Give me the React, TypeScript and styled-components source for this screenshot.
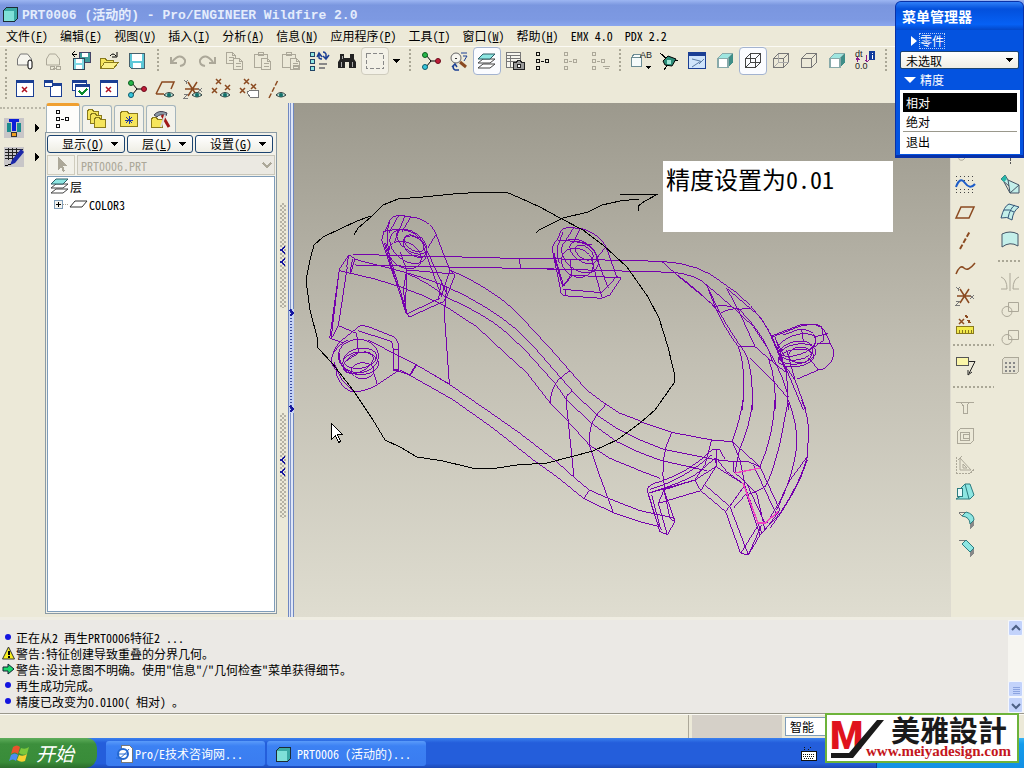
import { ReactNode, useState } from "react";
import styled, { createGlobalStyle } from "styled-components";

const Global = createGlobalStyle`
    *{
        box-sizing: border-box;
    }
    body{
        margin: 0;
        background-color: #ece9d8;
        color: black;
        font-family: "Noto Sans Mono CJK SC", "Noto Sans CJK SC", sans-serif;
        font-size: 12px;
    }
    button, select{
        font: inherit;
        color: inherit;
    }
    button{
        padding: 0;
        border: none;
        background: none;
    }
`;

const Page = styled.div`
    display: flex;
    flex-direction: column;
    min-height: 100vh;
`;

const TitleBar = styled.header`
    display: flex;
    align-items: center;
    height: 26px;
    padding: 0 3px;
    column-gap: 4px;
    color: #e4ecfc;
    background: linear-gradient(#9db6f2, #7a96df 20%, #7d99e2 75%, #8aa6ee);
    h1{
        margin: 0;
        font-family: "Liberation Mono", "Noto Sans CJK SC", monospace;
        font-size: 13px;
        font-weight: bold;
        white-space: pre;
    }
`;

const MenuBar = styled.nav`
    display: flex;
    align-items: center;
    height: 21px;
    padding: 0 6px;
    column-gap: 12px;
    border-bottom: 1px solid #fbfaf4;
    button{
        white-space: nowrap;
        line-height: 18px;
    }
`;

const Toolbar = styled.div`
    display: flex;
    align-items: center;
    height: 28px;
`;

const Handle = styled.span<{ $first?: boolean }>`
    width: ${(p) => (p.$first ? "11px" : "14px")};
    height: 24px;
    background: repeating-linear-gradient(#aaa796 0 2px, transparent 2px 4px) center / 2px 100% no-repeat;
`;

const Tool = styled.button<{ $active?: boolean; $framed?: boolean }>`
    display: flex;
    justify-content: center;
    align-items: center;
    width: 28px;
    height: 28px;
    border-radius: 4px;
    border: 1px solid ${(p) => (p.$active ? "#a3b3d0" : p.$framed ? "#cfccbd" : "transparent")};
    background-color: ${(p) => (p.$active ? "#fbfcff" : p.$framed ? "#f3f1e7" : "transparent")};
`;

const DropTool = styled(Tool)`
    width: 14px;
`;

const Work = styled.main`
    display: flex;
    flex: 1;
    min-height: 514px;
`;

const SideBar = styled.div`
    width: 45px;
    border-top: 2px dotted #bab7a8;
    margin-top: 4px;
`;

const SideRow = styled.div`
    display: flex;
    align-items: center;
    height: 29px;
    padding-top: 8px;
    column-gap: 2px;
    button{
        display: flex;
    }
    button:first-child{
        padding-left: 4px;
    }
`;

const Navigator = styled.aside`
    display: flex;
    flex-direction: column;
    width: 232px;
    padding-bottom: 3px;
`;

const Tabs = styled.div`
    display: flex;
    align-items: flex-end;
    height: 29px;
    column-gap: 2px;
    padding-left: 1px;
`;

const Tab = styled.button<{ $active?: boolean }>`
    display: flex;
    justify-content: center;
    align-items: center;
    width: ${(p) => (p.$active ? "34px" : "30px")};
    height: ${(p) => (p.$active ? "29px" : "27px")};
    border: 1px solid #a5b5bd;
    border-top: ${(p) => (p.$active ? "3px solid #f0a030" : "1px solid #a5b5bd")};
    border-bottom: none;
    border-radius: 3px 3px 0 0;
    background-color: ${(p) => (p.$active ? "#fdfdfb" : "#f3f2ea")};
`;

const Panel = styled.div`
    display: flex;
    flex-direction: column;
    flex: 1;
    padding: 1px;
    row-gap: 1px;
    border: 1px solid #8a9aa4;
    background-color: #f2f1e9;
`;

const PanelRow = styled.div`
    display: flex;
    align-items: center;
    height: 20px;
    column-gap: 2px;
`;

const PushButton = styled.button<{ $width: string }>`
    display: flex;
    justify-content: flex-end;
    align-items: center;
    width: ${(p) => p.$width};
    height: 18px;
    white-space: nowrap;
    line-height: 16px;
    border: 1px solid #1c4470;
    border-radius: 3px;
    background: linear-gradient(#ffffff, #eeede4);
`;

const PickButton = styled.button`
    display: flex;
    justify-content: center;
    align-items: center;
    width: 28px;
    height: 20px;
    border: 1px solid #cfccbd;
`;

const PartSelect = styled.select`
    flex: 1;
    height: 20px;
    padding: 0 3px;
    border: 1px solid #c9c7ba;
    border-radius: 0;
    appearance: none;
    background: #ebe9e2;
    &:disabled{
        color: #aca899;
        opacity: 1;
    }
`;

const SelectBox = styled.div`
    display: flex;
    flex: 1;
    align-items: center;
    svg{
        margin-left: -20px;
        pointer-events: none;
    }
`;

const Tree = styled.ul`
    flex: 1;
    margin: 0;
    padding: 0 2px;
    list-style: none;
    border: 1px solid #7f9db9;
    background-color: white;
    ul{
        margin: 0;
        padding: 0;
        list-style: none;
    }
    span{
        display: flex;
        align-items: center;
        height: 18px;
    }
`;

const Sash = styled.div`
    display: flex;
    flex-direction: column;
    align-items: center;
    width: 11px;
    padding-top: 100px;
    row-gap: 105px;
`;

const Grip = styled.button`
    display: flex;
    flex-direction: column;
    justify-content: center;
    align-items: center;
    row-gap: 4px;
    width: 6px;
    height: 105px;
    background: repeating-conic-gradient(#b5b2a5 0 25%, #ece9d8 0 50%) 0 0 / 4px 4px;
`;

const Divider = styled.div`
    display: flex;
    flex-direction: column;
    justify-content: flex-start;
    align-items: center;
    width: 6px;
    padding-top: 206px;
    border: 1px solid #7088c0;
    border-width: 0 1px;
    background: linear-gradient(90deg, #dfe6f6 0 1px, #8095ca 1px 2px, #dfe6f6 2px);
`;

const DividerGrip = styled.button`
    display: flex;
    flex-direction: column;
    justify-content: space-between;
    width: 5px;
    height: 104px;
    background: repeating-linear-gradient(#3b4da0 0 1px, #c5d2f4 1px 3px) center / 2px 100% no-repeat #c5d2f4;
`;

const Viewport = styled.section`
    position: relative;
    flex: 1;
    background: linear-gradient(#9c998d, #c2bfb3 50%, #dfddd0);
`;

const Model = styled.svg`
    display: block;
    width: 100%;
    max-width: 656px;
    fill: none;
    stroke-width: 3;
    shape-rendering: crispEdges;
`;

const Note = styled.p`
    position: absolute;
    left: 369px;
    top: 58px;
    width: 230px;
    height: 71px;
    margin: 0;
    padding: 1px 3px;
    font-size: 24px;
    line-height: 34px;
    font-weight: 300;
    background-color: white;
`;

const FeatureBar = styled.div`
    display: flex;
    border-left: 1px solid #dedbd0;
`;

const FeatureColumn = styled.div<{ $width: string }>`
    width: ${(p) => p.$width};
    padding-top: 39px;
    hr{
        height: 2px;
        margin: 6px 2px;
        border: none;
        background: repeating-linear-gradient(90deg, #aaa796 0 2px, transparent 2px 4px);
    }
`;

const Messages = styled.section`
    display: flex;
    height: 97px;
    border-top: 3px solid #efede2;
    border-bottom: 1px solid #9a988c;
    background-color: #ebe9e5;
    ul{
        flex: 1;
        margin: 0;
        padding: 9px 2px 0;
        list-style: none;
    }
    li{
        display: flex;
        align-items: center;
        height: 16px;
        white-space: pre;
    }
    li svg{
        margin-right: 1px;
    }
`;

const ScrollBar = styled.div`
    display: flex;
    flex-direction: column;
    width: 16px;
    background-color: #f6f5f0;
    div{
        flex: 1;
    }
    button{
        display: flex;
        justify-content: center;
        align-items: center;
        width: 15px;
        height: 16px;
        border: 1px solid #f4f7fe;
        border-radius: 2px;
        background-color: #c3d3fb;
    }
`;

const StatusBar = styled.footer`
    display: flex;
    align-items: center;
    height: 24px;
    border-top: 1px solid #fbfaf4;
    column-gap: 3px;
`;

const StatusText = styled.div`
    flex: 1;
    align-self: stretch;
    border-right: 1px solid #aca899;
`;

const StatusWell = styled.div`
    align-self: stretch;
    width: 90px;
    background-color: #d5d0c8;
`;

const FilterSelect = styled.select`
    width: 110px;
    height: 19px;
    margin-right: 129px;
    padding: 0 4px;
    border: 1px solid #7f9db9;
    border-radius: 0;
    appearance: none;
    background-color: white;
`;

const TaskBar = styled.footer`
    display: flex;
    align-items: center;
    height: 30px;
    background: linear-gradient(#3a80ee, #245edb 16%, #245edb 85%, #1c48b4);
    color: white;
`;

const Start = styled.button`
    display: flex;
    align-items: center;
    column-gap: 7px;
    width: 97px;
    height: 30px;
    margin-right: 9px;
    padding-left: 9px;
    border-radius: 0 10px 12px 0;
    font-size: 19px;
    line-height: 24px;
    font-weight: 300;
    font-style: italic;
    color: white;
    background: linear-gradient(#5fae5c, #3c8f3c 20%, #398c39 80%, #2c6d2c);
`;

const Task = styled.button`
    display: flex;
    align-items: center;
    width: 159px;
    height: 25px;
    margin-right: 2px;
    padding-left: 9px;
    border-radius: 3px;
    white-space: pre;
    color: white;
    background: linear-gradient(#5a9bfa, #3c81f3 20%, #3a7cf0);
`;

const Keyboard = styled.button`
    display: flex;
    margin-left: auto;
    margin-right: 58px;
`;

const Tray = styled.div`
    align-self: stretch;
    width: 148px;
    border-left: 1px solid #0b3c9a;
    background: linear-gradient(#3ab4f4, #149cec 20%, #1290e4);
`;

const MenuManager = styled.aside`
    position: absolute;
    top: 1px;
    right: 0;
    width: 129px;
    height: 157px;
    padding: 0 4px;
    border: 1px solid #0831a8;
    border-bottom-width: 3px;
    border-radius: 6px 6px 0 0;
    color: white;
    background-color: #0453e0;
    h2{
        margin: 0 -4px;
        padding: 0 6px;
        border-radius: 5px 5px 0 0;
        font-size: 14px;
        line-height: 28px;
        font-weight: bold;
        background: linear-gradient(#2f80f8, #0350dc 25%, #0661f5 80%, #0347c8);
    }
    select{
        width: 119px;
        height: 18px;
        padding: 0 5px;
        border: 1px solid #1c4470;
        border-radius: 2px;
        appearance: none;
        color: black;
        background: linear-gradient(#ffffff, #eeede4);
    }
    ${SelectBox}{
        height: 18px;
    }
`;

const MenuHead = styled.button<{ $focus?: boolean }>`
    display: flex;
    align-items: center;
    column-gap: 2px;
    height: 21px;
    padding-left: 4px;
    color: white;
    span{
        line-height: 14px;
        border: 1px dotted ${(p) => (p.$focus ? "#b9cdf5" : "transparent")};
    }
`;

const MenuList = styled.div`
    width: 120px;
    padding: 3px;
    background-color: white;
    color: black;
    hr{
        margin: 0;
        border: none;
        border-top: 1px solid #9a988c;
    }
`;

const MenuOption = styled.button<{ $selected?: boolean }>`
    display: block;
    width: 100%;
    height: 19px;
    padding-left: 3px;
    text-align: left;
    color: ${(p) => (p.$selected ? "white" : "black")};
    background-color: ${(p) => (p.$selected ? "black" : "white")};
`;

const Brand = styled.a`
    position: absolute;
    right: 5px;
    bottom: 5px;
    display: flex;
    width: 194px;
    height: 50px;
    padding: 0 4px;
    border: 2px solid #6db33a;
    background-color: white;
    text-decoration: none;
    svg{
        flex: none;
    }
`;

const BrandText = styled.span`
    display: flex;
    flex-direction: column;
    margin-left: -25px;
    b{
        padding-left: 25px;
        font-size: 29px;
        line-height: 28px;
        font-weight: 900;
        color: #1a1a1a;
    }
    small{
        font-family: "Liberation Serif", serif;
        font-size: 15px;
        line-height: 17px;
        font-weight: bold;
        color: #c4161c;
    }
`;

const IconSvg = styled.svg`
    display: block;
    flex: none;
    fill: none;
    stroke-width: 1;
    shape-rendering: crispEdges;
    overflow: visible;
    text{
        font-family: "Liberation Sans", sans-serif;
        font-size: 9px;
        fill: #222;
    }
`;

const cyan = "#8de6e2";
const grey = "#aca899";
const brown = "#8b4a20";
const blue = "#1b3f94";

const sheet = (x: number, y: number) => (
    <path d={`M${x} ${y}h6l3 3v8h-9zM${x + 6} ${y}v3h3M${x + 2} ${y + 5}h5M${x + 2} ${y + 8}h5`} fill="#ece9d8" stroke={grey} />
);
const cross = (x: number, y: number, c = brown) => (
    <path d={`M${x} ${y}l5 5M${x + 5} ${y}l-5 5`} stroke={c} strokeWidth="1.5" shapeRendering="auto" />
);
const eye = (
    <g shapeRendering="auto">
        <path d="M9 16q5-5 10 0q-5 4-10 0z" fill="#b6dcd4" stroke="#2c3c3c" />
        <circle cx="14" cy="16" r="2" fill="#12706a" />
    </g>
);
const windowFrame = (x: number, y: number, w: number, h: number) => (
    <>
        <rect x={x + 0.5} y={y + 0.5} width={w} height={h} fill="white" stroke={blue} />
        <path d={`M${x} ${y + 1.5}h${w + 1}`} stroke={blue} strokeWidth="3" />
    </>
);
const cube = (fill: string, c: string, hidden?: string, side = fill) => (
    <>
        <path d="M2.5 7.5l5-5h10v9l-5 5h-10z" fill={fill} stroke={c} />
        {side !== fill && <path d="M12.500 7.500l5-5v9l-5 5z" fill={side} />}
        {side !== fill && <path d="M3 7h10v9h-10z" fill="white" stroke={c} />}
        <path d="M2.500 7.500h10v9M12.500 7.500l5-5" stroke={c} />
        {hidden && <path d="M7.500 2.500v9h10M7.500 11.500l-5 5" stroke={hidden} />}
    </>
);
const nodes = (c: string) => <path d="M3.500 1.500h3v3h-3zM3.500 8.500h3v3h-3zM3.500 15.500h3v3h-3zM12.500 8.500h3v3h-3zM8 10.500h3" stroke={c} />;
const molecule = (
    <g shapeRendering="auto">
        <path d="M5 4l5 6l-5 6M10 10h7" stroke="black" />
        <circle cx="4" cy="4" r="2.500" fill="#27b84a" stroke="#0c5c20" />
        <circle cx="4" cy="16" r="2.500" fill="#36c6dc" stroke="#0c5c6c" />
        <circle cx="17" cy="10" r="2.500" fill="#c01c38" stroke="#6c0c1c" />
    </g>
);
const layers = (
    <g shapeRendering="auto">
        <path d="M1 17l5-4h12l-5 4z" fill="white" stroke="#444" />
        <path d="M1 12l5-4h12l-5 4z" fill="white" stroke="#444" />
        <path d="M1 8l5-5h12l-5 5z" fill={cyan} stroke="#2c5c64" />
    </g>
);
const folder = (x: number, y: number) => (
    <path d={`M${x + 0.5} ${y + 2.5}l1-2h4l1 2h5v8h-11z`} fill="#f6e55c" stroke="#8a7a1c" />
);
const overlap = <path d="M8.500 2.500h10v9h-10zM12 11.500a5 5 0 1 1 -5-5a5 5 0 0 1 5 5z" stroke={grey} shapeRendering="auto" />;
const axes = <path d="M2 10h14M5 3l9 14M14 3l-9 14" stroke={brown} shapeRendering="auto" strokeWidth="1.500" />;
const xyz = <path d="M1 1l2 2l2-2M3 3v2M1 15h4l-4 4h4M15 9l4 4M19 9l-4 4" stroke="#777" />;

const shapes: Record<string, ReactNode> = {
    app: <><path d="M2.500 5.500l3-3h11v11l-3 3h-11z" fill="#3aa9a4" stroke="#1c2c34" /><path d="M3 6h10v10h-10z" fill="#7fe0d8" /></>,
    newPart: <><path d="M2.500 8l3-5h7l4 5v6h-14z" fill="#f6f5ee" stroke="#777" shapeRendering="auto" /><rect x="13" y="9" width="4" height="9" rx="2" fill="white" stroke="black" shapeRendering="auto" /></>,
    closed: <><path d="M3.500 8l3-5h6l4 5v6h-13z" stroke={grey} shapeRendering="auto" /><path d="M7 15.500h4v3h-4zM13 15.500h4v3h-4zM10 17h4" stroke={grey} /></>,
    swap: <><path d="M8.500 1.500h11v10h-11z" fill="#3f9c9c" stroke="#446" /><path d="M11 2h6v4h-6z" fill="white" /><path d="M2.500 7.500h11v11h-11z" fill="#7fd8e4" stroke="#345" /><path d="M5 8h6v4h-6zM5 14h6v4h-6z" fill="white" /><path d="M1 3l3-3M1 3l3 3M1 3h5" stroke="black" /></>,
    open: <><path d="M1.500 17.500v-10h5l1 2h7v3" fill="#f6e55c" stroke="#8a7a1c" /><path d="M1.500 17.500l4-6h14l-5 6z" fill="#fbf08a" stroke="#8a7a1c" /><path d="M11 5q3-4 6 0M18 1v5h-5" stroke="black" shapeRendering="auto" /></>,
    save: <><path d="M2.500 2.500h15v15h-13l-2-2z" fill="#5ec8d8" stroke="#46606c" /><path d="M5 3h10v7h-10zM6 12h8v5h-8z" fill="white" /></>,
    undo: <path d="M3 11q8-10 13-2q1 5-5 6M2 6v6h6" stroke={grey} strokeWidth="2" shapeRendering="auto" />,
    redo: <path d="M16 11q-8-10-13-2q-1 5 5 6M18 6v6h-6" stroke={grey} strokeWidth="2" shapeRendering="auto" />,
    copy: <>{sheet(1.5, 1.5)}{sheet(8.5, 7.5)}</>,
    paste: <><path d="M1.500 3.500h13v13h-13zM5.500 1.500h5v3h-5z" stroke={grey} />{sheet(8.5, 7.5)}</>,
    pasteSpecial: <><path d="M1.500 3.500h13v13h-13zM5.500 1.500h5v3h-5z" stroke={grey} />{sheet(9.5, 7.5)}<path d="M12 14h5v3h-5z" stroke={grey} /></>,
    regen: <><path d="M1.500 1.500h4v4h-4zM1.500 8.500h4v4h-4zM1.500 15.500h4v4h-4z" fill={cyan} stroke="#246" /><path d="M8 6l2-4l3 4M10 3v4q1 1 3 1M20 4l-3 4l-3-3M17 7v-4q-1-2-3-2" stroke={blue} strokeWidth="1.500" shapeRendering="auto" /><path d="M10 13h8M10 17h6" stroke="#888" strokeWidth="1.500" /></>,
    find: <><path d="M3 3h4v4h6v-4h4v5l2 3v6h-7v-6h-4v6h-7v-6l2-3z" fill="#222" shapeRendering="auto" /><path d="M4 11v5M15 11v5M5 5v3" stroke="#aaa" /></>,
    selectBox: <path d="M1.500 2.500h17v15h-17z" stroke="#888" strokeDasharray="4 2" />,
    drop: <path d="M6 8h8l-4 4z" fill="black" />,
    molecule,
    zoomRefit: <><circle cx="7" cy="7" r="5" fill="#f6f5ee" stroke="#666" shapeRendering="auto" /><path d="M11 11l6 5" stroke={brown} strokeWidth="3" shapeRendering="auto" /><path d="M6 7h2" stroke="#333" /><path d="M12 2h6M14 5h4M18 5l-3 5" stroke={blue} shapeRendering="auto" /><path d="M10 19h-4q-3-2-1-4M3 16l3-3l2 3" stroke={blue} strokeWidth="1.500" shapeRendering="auto" /></>,
    layers,
    tableCamera: <><path d="M1.500 1.500h14v15h-14zM1.500 4.500h14M1.500 7.500h14M1.500 10.500h14M5.500 4.500v12" fill="#f6f5ee" stroke="#777" /><path d="M8.500 11.500h3l1-2h3l1 2h3v7h-11z" fill="#9a9a9a" stroke="#222" /><circle cx="14" cy="15" r="2" fill="white" stroke="#222" /></>,
    nodes: nodes("#111"),
    nodesOff: nodes(grey),
    nodesDrop: <>{nodes(grey)}<path d="M14 15h7M16 17h4" stroke={grey} /></>,
    viewList: <><path d="M1 5.500l2-2h6v3M0 6.500h10v9h-10z" fill="#f6fbfb" stroke="#6c8c94" /><text x="9" y="7">AB</text><path d="M14 15h6l-3 3z" fill="black" /></>,
    shadedPin: <><path d="M1 2l7 6M19 9h-6M5 19l4-6" stroke="black" /><path d="M4 10l5-5l8 3l-4 7l-7-1z" fill="#2c8c78" stroke="black" shapeRendering="auto" /><path d="M8 9h4v4h-4z" fill="#9fe8d8" /></>,
    viewWindow: <><path d="M1.500 1.500h17v16h-17z" fill="#cfe4fb" stroke={blue} /><path d="M1 3h18" stroke={blue} strokeWidth="4" /><path d="M5 8l8 2M5 16l9-6M12 13l5-5" stroke="#5c7ca4" shapeRendering="auto" /></>,
    cubeShaded: cube("#9fe6e0", "#8aa", undefined, "#3f8e88"),
    cubeWire: cube("none", "#444", "#444"),
    cubeHidden: cube("none", "#777", "#aaa"),
    cubeNoHidden: cube("none", "#777"),
    dims: <><text x="0" y="6">dt</text><text x="0" y="18">0.0</text><path d="M2.500 7v4M1 9l1.500-2l2 2M11.500 4v7M10 9l2 2l2-2" stroke="#8c1c8c" /><path d="M14 0h6v9h-6z" fill="#123c9c" /><path d="M17 2v1M17 4v4" stroke="white" /></>,
    winClose: <>{windowFrame(1, 1, 17, 16)}{cross(7, 8, "#b01020")}</>,
    winNew: <>{windowFrame(7, 4, 11, 13)}{windowFrame(1, 1, 8, 6)}</>,
    winCheck: <>{windowFrame(1, 1, 14, 10)}{windowFrame(4, 5, 14, 12)}<path d="M8 12l3 3l5-5" stroke="#0c8c2c" strokeWidth="2" /></>,
    planeEye: <><path d="M1 15l6-12h12l-3 7M1 15h8" stroke={brown} shapeRendering="auto" strokeWidth="1.500" />{eye}</>,
    axesEye: <>{axes}{xyz}{eye}</>,
    pointsEye: <>{cross(5, 0)}{cross(1, 9)}{cross(14, 6)}{eye}</>,
    pointsTag: <>{cross(5, 0)}{cross(1, 9)}{cross(12, 5)}<path d="M8 13l4-2h7v7h-8z" fill="white" stroke="#777" /></>,
    axisEye: <><path d="M2 19L11 1" stroke={brown} strokeDasharray="5 2" strokeWidth="1.500" shapeRendering="auto" />{eye}</>,
    bolt: <><path d="M0 0h20v20h-20z" fill="#c8c6c8" /><path d="M3 5h4v9h-4zM13 5h4v9h-4z" fill="#1c8c8c" /><path d="M5 1h10v3h-3v9h-4v-9h-3z" fill="#0c1cd8" /><path d="M7.500 14.500h5v4h-5z" fill="#f0a020" stroke="#333" /></>,
    sketchPen: <><path d="M0 0h20v20h-20z" fill="#c8c6c8" /><path d="M1 2.500h18M1 5.500h18M1 8.500h16M1 11.500h12M4.500 1v12M8.500 1v12M12.500 1v10" stroke="#222" /><path d="M20 5l-9 11l-5 2l2-5l9-11z" fill="#1c28a8" shapeRendering="auto" /><path d="M1 19l6-2" stroke="black" /></>,
    right: <path d="M9 6l5 4l-5 4z" fill="black" />,
    folders: <>{folder(0, 0)}{folder(3, 4)}{folder(7, 8)}</>,
    favorites: <><path d="M1.500 4.500l1-2h6l1 2h9v13h-17z" fill="#f6e55c" stroke="#8a7a1c" /><path d="M10 7v8M6 11h8M7 8l6 6M13 8l-6 6" stroke="#1c38a8" /></>,
    tools: <>{folder(0, 8)}<path d="M3 6q5-6 13-2l-1 3q-6-3-9 1z" fill="#8a98a4" stroke="#445" shapeRendering="auto" /><path d="M11 6l7 12" stroke="#a01818" strokeWidth="3" shapeRendering="auto" /><path d="M14 6l-4 12" stroke="#ddd" strokeWidth="2" shapeRendering="auto" /></>,
    pick: <path d="M7 2v13l3-3l2 5l2-1l-2-5h4z" fill={grey} />,
    chevron: <path d="M8 8l4 4l4-4" stroke={grey} strokeWidth="2" />,
    plane: <path d="M1 13l5-6h12l-5 6z" stroke="#333" shapeRendering="auto" />,
    plus: <><path d="M4.500 6.500h8v8h-8z" fill="#f4f3ee" stroke="#7f9db9" /><path d="M6 10.500h5M8.500 8v5" stroke="black" /><path d="M13 10.500h6" stroke={grey} strokeDasharray="1 1" /></>,
    attach: <path d="M4 8l6-4q5-1 5 3l-7 7q-5 1-4-3l6-5" stroke={grey} shapeRendering="auto" />,
    mirrorTop: <path d="M10 4v14M2 7q6 6 6-2M18 7q-6 6-6-2" stroke="#555" strokeDasharray="3 1" />,
    sketch: <><path d="M1 2h18M1 6h18M1 15h18M1 18h18" stroke="#444" strokeDasharray="1 3" /><path d="M1 13q4-11 9-4t10 1" stroke="#1c5cc8" strokeWidth="2" shapeRendering="auto" /></>,
    planeTool: <path d="M1 16l5-11h13l-5 11z" stroke={brown} strokeWidth="1.500" shapeRendering="auto" />,
    axisTool: <path d="M5 19L15 1" stroke={brown} strokeWidth="2" strokeDasharray="5 2" shapeRendering="auto" />,
    curveTool: <path d="M1 16q4-10 8-6t11-5" stroke={brown} strokeWidth="1.500" shapeRendering="auto" />,
    csys: <>{axes}{xyz}</>,
    ruler: <><path d="M1.500 12.500h17v7h-17z" fill="#f2ea4c" stroke="#8a7a1c" /><path d="M4.500 16v3M7.500 16v3M10.500 16v3M13.500 16v3M16.500 16v3" stroke="#8a7a1c" />{cross(4, 5)}<path d="M11 1l1 3M13 6l2 3" stroke={brown} strokeWidth="2" /></>,
    annotate: <><path d="M1.500 1.500h12v8h-12z" fill="#fbf6a8" stroke="#555" /><path d="M14 5.500h6l-6 12M13 14v5l4-3" stroke="#222" shapeRendering="auto" /></>,
    hole: <path d="M1 4.500h5l2 3v8h4v-8l2-3h5M6 4.500h8" stroke={grey} />,
    shell: <><path d="M2.500 5.500l3-3h13v12l-3 3h-13z" stroke={grey} /><path d="M5.500 6.500h9v8h-9zM8.500 8.500h6v4h-6z" stroke={grey} /></>,
    rib: <><path d="M5 4v12h11zM8 10v4h4z" stroke={grey} shapeRendering="auto" /><path d="M1.500 3v16h14l4-4M1 8l6-6" stroke={grey} strokeDasharray="2 1" /></>,
    draft: <><path d="M1 17h14l4-4l-4-11h-5l-4 4v8z" fill={cyan} stroke="#2c7c80" shapeRendering="auto" /><path d="M10 2l4 15" stroke="#2c7c80" shapeRendering="auto" /><path d="M2 6h5v8h-5z" fill="#eafafa" stroke="#2c7c80" /></>,
    round: <><path d="M4 2.500h7M4 3l3 3" stroke="#777" /><path d="M7 6l4-4q8 2 8 8l-4 4q0-7-8-8z" fill={cyan} stroke="#2c7c80" shapeRendering="auto" /><path d="M15 14l4-4v5l-4 4z" fill="#888" /></>,
    chamfer: <><path d="M4 2.500h7" stroke="#777" /><path d="M7 6l4-4l8 8l-4 4z" fill={cyan} stroke="#2c7c80" shapeRendering="auto" /><path d="M15 14l4-4v5l-4 4z" fill="#888" /></>,
    sweep: <><path d="M1 5l4-4l3 5l11 5v8h-9l-1-7z" fill="#c4efea" stroke="#456" shapeRendering="auto" /><path d="M1 5l4-4l2 4l-3 3z" fill="#28b8a8" shapeRendering="auto" /><path d="M10 19l9-8M4 8l6 11M8 6l1 6" stroke="#456" shapeRendering="auto" /></>,
    blend: <><path d="M1 16q3-12 8-14l10 3q-6 4-7 13q-5-4-11-2z" fill="#c4efea" stroke="#357" shapeRendering="auto" /><path d="M8 16q2-10 7-13M4 8q6-1 10 2" stroke="#357" shapeRendering="auto" /></>,
    surface: <path d="M2 4q8-4 16 0v12q-8-5-16 1z" fill="#c4efea" stroke="#456" shapeRendering="auto" />,
    mirror: <path d="M10 1v18M1 5q6 2 6 12h-6M19 5q-6 2-6 12h6" stroke={grey} shapeRendering="auto" />,
    overlap,
    pattern: <><path d="M2.500 3.500l2-2h14v14l-2 2h-14z" fill="#e4e1d2" stroke={grey} /><path d="M5 7h10M5 11h10M5 15h10" stroke="#888" strokeWidth="2" strokeDasharray="2 2" /></>,
    bullet: <circle cx="6" cy="7" r="3" fill="#1414e0" shapeRendering="auto" />,
    warn: <><path d="M6.500 1l6 12h-12z" fill="#f8ee1c" stroke="#333" shapeRendering="auto" /><path d="M6.500 5v4M6.500 10v2" stroke="black" strokeWidth="2" /></>,
    arrow: <path d="M1 5h5v-3l6 5l-6 5v-3h-5z" fill="#1cd86c" stroke="#123" shapeRendering="auto" />,
    up: <path d="M2 7l4-4l4 4" stroke="#4d6185" strokeWidth="2" shapeRendering="auto" />,
    down: <path d="M2 4l4 4l4-4" stroke="#4d6185" strokeWidth="2" shapeRendering="auto" />,
    thumb: <path d="M3 3h7M3 5h7M3 7h7M3 9h7" stroke="#8ca4e0" />,
    less: <path d="M5 1l-4 3l4 3" stroke="#1414a0" strokeWidth="1.500" />,
    more: <path d="M1 1l3 3l-3 3" stroke="#1414a0" strokeWidth="1.500" />,
    flag: <g shapeRendering="auto"><path d="M4 4q4-3 7 0l-2 7q-3-3-7 0z" fill="#e8542c" /><path d="M12 5q4 2 8-1l-2 7q-4 2-8-1z" fill="#7cc83c" /><path d="M2 12q4-3 7 0l-2 6q-3-3-7 0z" fill="#4c8cf0" /><path d="M10 12q4 2 8-1l-2 7q-4 2-8-1z" fill="#f8d030" /></g>,
    browser: <><path d="M6 2h8l3 3v14h-11z" fill="white" stroke="#777" /><circle cx="8" cy="11" r="5" fill="white" stroke="#2468d0" strokeWidth="2" shapeRendering="auto" /><path d="M4 11h8M1 15q5 2 13-9" stroke="#2468d0" shapeRendering="auto" /></>,
    keyboard: <><path d="M4 6v-3M8 6q0-3 4-3" stroke="#111" strokeDasharray="1 1" /><rect x="1.500" y="7.500" width="15" height="9" fill="white" stroke="#111" /><path d="M3 10h12M3 12h12M4 14h10" stroke="#111" strokeDasharray="1 1" /></>,
    headRight: <path d="M7 5v10l6-5z" fill="white" shapeRendering="auto" />,
    headDown: <path d="M0 7h12l-6 6z" fill="white" shapeRendering="auto" />,
};

const sizes: Record<string, [number, number]> = {
    bullet: [13, 14], warn: [13, 14], arrow: [13, 14], up: [12, 11], down: [12, 11], thumb: [12, 11],
    less: [6, 8], more: [5, 8], headRight: [13, 20], headDown: [13, 20], app: [15, 17], plus: [19, 20], keyboard: [18, 18],
    viewList: [21, 20], dims: [21, 20],
};

function Icon({ name }: { name: string }) {
    const [w, h] = sizes[name] || [20, 20];
    const left = name === "app" ? 2 : 0;
    return (
        <IconSvg width={w} height={h} viewBox={`${left} 0 ${w} ${h}`} aria-hidden="true">
            {shapes[name]}
        </IconSvg>
    );
}

const menus = [
    ["文件", "F"], ["编辑", "E"], ["视图", "V"], ["插入", "I"], ["分析", "A"], ["信息", "N"],
    ["应用程序", "P"], ["工具", "T"], ["窗口", "W"], ["帮助", "H"], ["EMX 4.0", ""], ["PDX 2.2", ""],
];

const topTools = [
    ["newPart", "closed", "swap", "open", "save"],
    ["undo", "redo", "copy", "paste", "pasteSpecial", "regen", "find", "selectBox"],
    ["molecule", "zoomRefit", "layers", "tableCamera", "nodes", "nodesOff", "nodesDrop"],
    ["viewList", "shadedPin", "viewWindow", "cubeShaded", "cubeWire", "cubeHidden", "cubeNoHidden", "cubeShaded", "dims"],
];

const datumTools = ["winClose", "winNew", "winCheck", "winClose", "molecule", "planeEye", "axesEye", "pointsEye", "pointsTag", "axisEye"];

const featureLeft = [
    "attach", "sketch", "planeTool", "axisTool", "curveTool", "csys", "ruler", "-", "annotate", "-",
    "hole", "shell", "rib", "draft", "round", "chamfer",
];
const featureRight = ["mirrorTop", "sweep", "blend", "surface", "-", "mirror", "overlap", "overlap", "pattern"];

const messages = [
    ["bullet", "正在从2 再生PRT0006特征2 ..."],
    ["warn", "警告:特征创建导致重叠的分界几何。"],
    ["arrow", "警告:设计意图不明确。使用\"信息\"/\"几何检查\"菜单获得细节。"],
    ["bullet", "再生成功完成。"],
    ["bullet", "精度已改变为0.0100( 相对) 。"],
];

// wireframe edges, drawn at three times the screen size from each part's origin
const parts = [
    {
        x: 290, y: 180,
        d: `M275 180Q278 158 292 140L300 120Q310 105 335 106L385 115Q425 130 437 160L458 215L480 270L495 285L470 350L460 365L358 411L350 402L275 180
            M300 120Q285 165 297 215M280 155Q310 145 360 152M437 165L413 205M325 108L296 160M345 108L312 190M362 112L336 155
            M283 190L348 400M287 190L352 402M350 270L340 330L350 400M350 275L346 400M350 270L490 282M410 210L470 340M400 200L455 350M350 402L450 355
            M330 215L350 270M455 300L445 360M480 270L455 345
            M176 225L148 268L119 475M172 260L145 437M176 225L170 262M148 268L123 478L145 437M176 225L195 235L182 280M188 238L180 275
            M190 223L460 230L570 232L688 236L800 236M195 255L420 260L690 265L810 268M688 236L692 265
            M148 272Q160 275 182 280Q330 310 460 375L560 440L635 510
            M480 270Q640 340 720 440L785 510
            M195 238L300 265Q400 290 470 320Q600 380 675 445L740 510
            M350 280Q420 310 465 350Q580 400 640 450L705 510
            M470 320L463 400L478 612
            M119 475L165 490M145 437L200 460L205 520L165 545M200 445Q210 432 235 440L310 470Q325 480 327 500V570L262 614Q220 640 180 634Q140 610 138 570L124 550Q124 515 150 485L200 445
            M205 452L305 485L310 510V570M310 510H327M130 520Q150 490 175 480M131 545L155 600L190 634M262 614L250 575M147 520Q150 560 175 580M310 570H327
            M235 480L330 530L380 555L478 612M310 570L330 575L362 585M380 555L362 585`,
        eyes: [[355, 200, 62, 42, 38], [365, 185, 52, 28, 35], [372, 190, 34, 20, 35], [345, 225, 52, 38, 30], [375, 200, 40, 26, 40],
            [205, 528, 60, 50, 0], [210, 535, 50, 30, -10], [212, 550, 54, 34, 0], [218, 572, 34, 24, 0], [205, 548, 48, 28, -25]],
    },
    {
        x: 400, y: 350,
        d: `M0 20L47 43L148 103L260 180L360 250L470 335L522 382L568 420L625 445L720 482
            M0 60L30 76L160 150L280 235L400 330L470 380L552 446L640 488L720 515M47 43L30 76M568 420L552 446
            M498 150L522 382M498 150Q500 130 518 124M450 158Q455 110 475 90Q495 70 510 63M568 285Q565 230 590 195L618 163M568 285L600 380L640 488
            M455 0L510 63L560 120L618 163L660 190L720 212M410 0L475 75L518 124L590 195L650 235L720 270
            M375 0L465 100L500 150L575 220L650 275L720 308M305 0L380 68L450 158L500 210L568 285L630 325L720 362`,
        eyes: [],
    },
    {
        x: 520, y: 150,
        d: `M0 325L120 327L340 332L425 334Q540 340 610 400Q700 455 755 558M0 355L100 357L340 364L462 367Q530 375 560 405
            M425 334Q480 385 550 440L585 470M462 367Q560 440 600 490M560 405L600 490M560 405Q650 480 700 530Q780 640 805 740M620 415L720 500M560 405L585 470M620 415L655 480L705 590
            M585 470Q610 460 655 478L690 475M600 490Q625 475 655 475M585 470Q610 530 655 590Q680 650 667 780M600 490Q640 560 670 600Q700 640 697 780
            M655 590H705L745 625Q770 690 765 780M690 625Q760 690 800 740M745 625L795 665M655 475Q740 560 760 640
            M755 558L800 660L850 780M755 558L790 640L825 690L858 780M745 540L800 670L805 780M765 560L800 670M720 500L745 540
            M755 558L840 525Q900 515 915 545L940 600Q945 625 925 645Q910 662 895 660L830 688M757 561L842 528Q890 518 905 530
            M770 575L790 615M790 555L840 537Q880 540 885 560Q890 590 870 600M885 560L925 550M890 580H930M845 537L850 575M865 625L880 640L895 660M825 690L800 600M870 600L912 570L905 530M780 600L790 640
            M97 300Q98 280 112 270L122 245Q130 232 150 232L190 237Q240 255 258 290L290 380L303 384L270 435L245 445L130 437Q118 430 122 420L97 300
            M100 310L128 410L155 372M102 310L131 408L158 374M258 290L230 325M155 375L303 384M160 235L135 275M180 238L158 280M130 418L245 428L290 380M215 330L245 440M230 325L265 415M137 420L135 437
            M112 270Q150 270 215 285M130 245L118 275Q105 300 118 340M150 330L155 372`,
        eyes: [[180, 318, 62, 42, 38], [190, 308, 46, 26, 35], [193, 308, 30, 18, 35], [172, 338, 50, 42, 30],
            [832, 612, 56, 30, -10], [830, 602, 50, 28, -10], [840, 615, 34, 24, -5], [828, 624, 54, 26, -8], [830, 585, 60, 30, -18]],
    },
    {
        x: 580, y: 400,
        d: `M180 65L275 97L395 120L457 125L540 200L600 330L555 390L540 405M180 120L250 148L400 178L460 185M180 158L245 182L380 212M180 212L240 235
            M180 332L240 345L285 355M180 365L240 380M275 97Q235 180 255 270M395 120L375 195L345 240
            M202 265Q210 252 240 245Q330 215 395 150Q410 145 420 150L435 178M205 280Q300 250 345 225L405 175L412 205
            M210 268Q310 240 395 165M202 265L205 285L240 395L262 404L285 365L252 270L235 310L262 404M215 285L240 380M205 280L232 370L245 390M252 270L270 355L285 365
            M235 310L362 272L437 335L482 460L505 465L540 405L500 285M495 255L437 335M362 272L408 200L495 255L445 325M408 200L345 240L205 280M250 270L345 240L362 272
            M375 255L450 320L505 465M457 125L480 180L495 255M462 185V215L530 280L555 390M460 185H505L540 200M412 178L440 215L495 255M492 250L545 400M500 250L555 370
            M482 460L535 375M505 465L545 375M500 285Q535 275 555 260Q575 230 600 130L625 0M460 325L500 280
            M490 0Q480 60 457 125M518 0Q510 80 478 150L465 215M585 0Q580 110 540 200M625 0Q655 80 650 140Q640 230 590 330
            M665 0Q690 60 685 110L682 170Q665 240 600 340L540 405M682 170L630 240Q600 310 560 370M682 180Q650 280 570 385M410 150L408 200M520 195L590 345`,
        eyes: [],
    },
];

function Wireframe() {
    return (
        <Model viewBox="294 103 656 514" role="img" aria-label="PRT0006">
            <g stroke="#7500ad">
                {parts.map((part) => (
                    <g key={`${part.x}-${part.y}`} transform={`translate(${part.x} ${part.y}) scale(0.33333)`}>
                        <path d={part.d} />
                        {part.eyes.map(([cx, cy, rx, ry, turn], i) => (
                            <ellipse key={i} cx={cx} cy={cy} rx={rx} ry={ry} transform={`rotate(${turn} ${cx} ${cy})`} />
                        ))}
                    </g>
                ))}
            </g>
            <path d="M735 473L760 468M743 483L758 523L765 523L778 512" stroke="#f040c0" strokeWidth="1.500" />
            <g stroke="black" strokeWidth="1">
                <path d="M354 235L358 228 371 217 383 205 398 199 423 197 453 194 483 192 506 192 520 198 540 207 560 218 583 230 603 245 627 267 648 297 659 318 668 347 674 372 674 383 655 410 640 423 617 440 593 451 570 457 547 463 517 465 497 468 472 468 443 461 417 457 400 447 385 440 373 420 353 390 332 363 318 348 317 337 310 310 306 280 310 260 314 245 323 237 357 221 371 216" />
                <path d="M536 233L539 230 563 218 588 212 602 205 620 201 639 199M620 194H658L645 201 638 206 638 211" />
                <path d="M331.500 423.500v16l4-4 3 7 2-1-3-7h5z" fill="white" />
            </g>
        </Model>
    );
}

function FeatureTools({ names, width }: { names: string[]; width: string }) {
    return (
        <FeatureColumn $width={width}>
            {names.map((name, i) => (name === "-" ? <hr key={i} /> : <Tool key={i} aria-label={name}><Icon name={name} /></Tool>))}
        </FeatureColumn>
    );
}

function App() {

    const [accuracy, setAccuracy] = useState("相对");

    return (
        <Page>
            <Global />
            <TitleBar>
                <Icon name="app" />
                <h1>PRT0006 (活动的) - Pro/ENGINEER Wildfire 2.0</h1>
            </TitleBar>
            <MenuBar>
                {menus.map(([label, key]) => (
                    <button key={label}>{label}{key && <>(<u>{key}</u>)</>}</button>
                ))}
            </MenuBar>
            <Toolbar>
                {topTools.map((group, g) => (
                    <Toolbar key={g}>
                        <Handle $first={g === 0} />
                        {group.map((name, i) => (
                            <Tool
                                key={i}
                                aria-label={name}
                                $active={name === "layers" || name === "cubeWire"}
                                $framed={name === "selectBox"}
                            >
                                <Icon name={name} />
                            </Tool>
                        ))}
                        {g === 1 && <DropTool aria-label="选取"><Icon name="drop" /></DropTool>}
                    </Toolbar>
                ))}
                <Handle />
            </Toolbar>
            <Toolbar>
                <Handle $first />
                {datumTools.map((name, i) => (
                    <Tool key={i} aria-label={name}><Icon name={name} /></Tool>
                ))}
            </Toolbar>
            <Work>
                <SideBar>
                    <SideRow>
                        <button aria-label="bolt"><Icon name="bolt" /></button>
                        <button aria-label="more"><Icon name="right" /></button>
                    </SideRow>
                    <SideRow>
                        <button aria-label="sketch"><Icon name="sketchPen" /></button>
                        <button aria-label="more"><Icon name="right" /></button>
                    </SideRow>
                </SideBar>
                <Navigator>
                    <Tabs>
                        <Tab $active aria-label="tree"><Icon name="nodes" /></Tab>
                        <Tab aria-label="folders"><Icon name="folders" /></Tab>
                        <Tab aria-label="favorites"><Icon name="favorites" /></Tab>
                        <Tab aria-label="tools"><Icon name="tools" /></Tab>
                    </Tabs>
                    <Panel>
                        <PanelRow>
                            <PushButton $width="78px"><span>显示(<u>O</u>)</span><Icon name="drop" /></PushButton>
                            <PushButton $width="66px"><span>层(<u>L</u>)</span><Icon name="drop" /></PushButton>
                            <PushButton $width="78px"><span>设置(<u>G</u>)</span><Icon name="drop" /></PushButton>
                        </PanelRow>
                        <PanelRow>
                            <PickButton disabled aria-label="pick"><Icon name="pick" /></PickButton>
                            <SelectBox>
                                <PartSelect disabled aria-label="part"><option>PRT0006.PRT</option></PartSelect>
                                <Icon name="chevron" />
                            </SelectBox>
                        </PanelRow>
                        <Tree>
                            <li>
                                <span><Icon name="layers" />层</span>
                                <ul>
                                    <li><span><Icon name="plus" /><Icon name="plane" />COLOR3</span></li>
                                </ul>
                            </li>
                        </Tree>
                    </Panel>
                </Navigator>
                <Sash>
                    <Grip aria-label="collapse"><Icon name="less" /><Icon name="less" /></Grip>
                    <Grip aria-label="collapse"><Icon name="less" /><Icon name="less" /></Grip>
                </Sash>
                <Divider>
                    <DividerGrip aria-label="expand"><Icon name="more" /><Icon name="more" /></DividerGrip>
                </Divider>
                <Viewport>
                    <Wireframe />
                    <Note>精度设置为0.01</Note>
                </Viewport>
                <FeatureBar>
                    <FeatureTools names={featureLeft} width="45px" />
                    <FeatureTools names={featureRight} width="28px" />
                </FeatureBar>
            </Work>
            <Messages>
                <ul>
                    {messages.map(([icon, text]) => (
                        <li key={text}><Icon name={icon} />{text}</li>
                    ))}
                </ul>
                <ScrollBar>
                    <button aria-label="up"><Icon name="up" /></button>
                    <div />
                    <button aria-label="thumb"><Icon name="thumb" /></button>
                    <button aria-label="down"><Icon name="down" /></button>
                </ScrollBar>
            </Messages>
            <StatusBar>
                <StatusText />
                <StatusWell />
                <FilterSelect aria-label="filter"><option>智能</option></FilterSelect>
            </StatusBar>
            <TaskBar>
                <Start><Icon name="flag" />开始</Start>
                <Task><Icon name="browser" />Pro/E技术咨询网...</Task>
                <Task><Icon name="app" /> PRT0006 (活动的)...</Task>
                <Keyboard aria-label="keyboard"><Icon name="keyboard" /></Keyboard>
                <Tray />
            </TaskBar>
            <MenuManager>
                <h2>菜单管理器</h2>
                <MenuHead $focus><Icon name="headRight" /><span>零件</span></MenuHead>
                <SelectBox>
                    <select aria-label="selection"><option>未选取</option></select>
                    <Icon name="drop" />
                </SelectBox>
                <MenuHead><Icon name="headDown" /><span>精度</span></MenuHead>
                <MenuList>
                    {["相对", "绝对"].map((item) => (
                        <MenuOption key={item} $selected={item === accuracy} onClick={() => setAccuracy(item)}>{item}</MenuOption>
                    ))}
                    <hr />
                    <MenuOption>退出</MenuOption>
                </MenuList>
            </MenuManager>
            <Brand href="#">
                <svg width="60" height="46" viewBox="0 0 60 46">
                    <text x="-1" y="34" fill="#e0141c" fontFamily="Roboto, sans-serif" fontSize="38" fontWeight="900">M</text>
                    <path d="M0 38H18L46 5H53L22 43H0Z" fill="#1a1a1a" />
                </svg>
                <BrandText><b>美雅設計</b><small>www.meiyadesign.com</small></BrandText>
            </Brand>
        </Page>
    );
}

export default App;
